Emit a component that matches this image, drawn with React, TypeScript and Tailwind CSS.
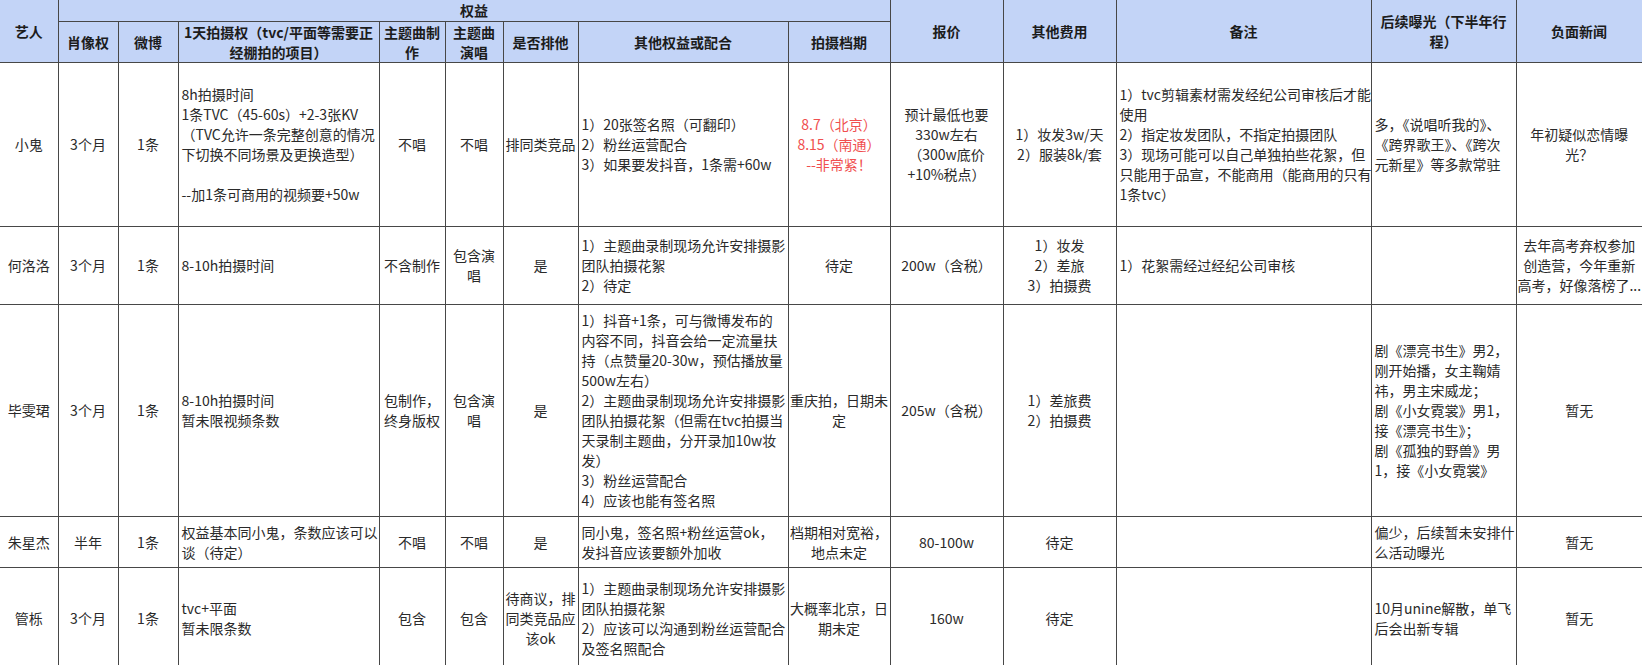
import React from "react";

type Row = {
  h: string;
  cells: string[][];
};

// column widths, taken from the sheet
const widths = [58, 60, 60, 201, 66, 58, 75, 210, 102, 113, 113, 255, 145, 126];
const aligns = ["c", "c", "c", "l", "c", "c", "c", "l", "c", "c", "c", "l", "l", "c"];

const rows: Row[] = [
  {
    h: "h-[164px]",
    cells: [
      ["小鬼"],
      ["3个月"],
      ["1条"],
      [
        "8h拍摄时间",
        "1条TVC（45-60s）+2-3张KV",
        "（TVC允许一条完整创意的情况",
        "下切换不同场景及更换造型）",
        "",
        "--加1条可商用的视频要+50w",
      ],
      ["不唱"],
      ["不唱"],
      ["排同类竞品"],
      ["1）20张签名照（可翻印）", "2）粉丝运营配合", "3）如果要发抖音，1条需+60w"],
      ["8.7（北京）", "8.15（南通）", "--非常紧！"],
      ["预计最低也要", "330w左右", "（300w底价", "+10%税点）"],
      ["1）妆发3w/天", "2）服装8k/套"],
      [
        "1）tvc剪辑素材需发经纪公司审核后才能",
        "使用",
        "2）指定妆发团队，不指定拍摄团队",
        "3）现场可能可以自己单独拍些花絮，但",
        "只能用于品宣，不能商用（能商用的只有",
        "1条tvc）",
      ],
      ["多，《说唱听我的》、", "《跨界歌王》、《跨次", "元新星》等多款常驻"],
      ["年初疑似恋情曝", "光？"],
    ],
  },
  {
    h: "h-[78px]",
    cells: [
      ["何洛洛"],
      ["3个月"],
      ["1条"],
      ["8-10h拍摄时间"],
      ["不含制作"],
      ["包含演", "唱"],
      ["是"],
      ["1）主题曲录制现场允许安排摄影", "团队拍摄花絮", "2）待定"],
      ["待定"],
      ["200w（含税）"],
      ["1）妆发", "2）差旅", "3）拍摄费"],
      ["1）花絮需经过经纪公司审核"],
      [],
      ["去年高考弃权参加", "创造营，今年重新", "高考，好像落榜了..."],
    ],
  },
  {
    h: "h-[212px]",
    cells: [
      ["毕雯珺"],
      ["3个月"],
      ["1条"],
      ["8-10h拍摄时间", "暂未限视频条数"],
      ["包制作，", "终身版权"],
      ["包含演", "唱"],
      ["是"],
      [
        "1）抖音+1条，可与微博发布的",
        "内容不同，抖音会给一定流量扶",
        "持（点赞量20-30w，预估播放量",
        "500w左右）",
        "2）主题曲录制现场允许安排摄影",
        "团队拍摄花絮（但需在tvc拍摄当",
        "天录制主题曲，分开录加10w妆",
        "发）",
        "3）粉丝运营配合",
        "4）应该也能有签名照",
      ],
      ["重庆拍，日期未", "定"],
      ["205w（含税）"],
      ["1）差旅费", "2）拍摄费"],
      [],
      [
        "剧《漂亮书生》男2，",
        "刚开始播，女主鞠婧",
        "祎，男主宋威龙；",
        "剧《小女霓裳》男1，",
        "接《漂亮书生》；",
        "剧《孤独的野兽》男",
        "1，接《小女霓裳》",
      ],
      ["暂无"],
    ],
  },
  {
    h: "h-[51px]",
    cells: [
      ["朱星杰"],
      ["半年"],
      ["1条"],
      ["权益基本同小鬼，条数应该可以", "谈（待定）"],
      ["不唱"],
      ["不唱"],
      ["是"],
      ["同小鬼，签名照+粉丝运营ok，", "发抖音应该要额外加收"],
      ["档期相对宽裕，", "地点未定"],
      ["80-100w"],
      ["待定"],
      [],
      ["偏少，后续暂未安排什", "么活动曝光"],
      ["暂无"],
    ],
  },
  {
    h: "h-[102px]",
    cells: [
      ["管栎"],
      ["3个月"],
      ["1条"],
      ["tvc+平面", "暂未限条数"],
      ["包含"],
      ["包含"],
      ["待商议，排", "同类竞品应", "该ok"],
      ["1）主题曲录制现场允许安排摄影", "团队拍摄花絮", "2）应该可以沟通到粉丝运营配合", "及签名照配合"],
      ["大概率北京，日", "期未定"],
      ["160w"],
      ["待定"],
      [],
      ["10月unine解散，单飞", "后会出新专辑"],
      ["暂无"],
    ],
  },
];

function Lines({ lines }: { lines: string[] }) {
  return (
    <>
      {lines.map((t, i) => (
        <div key={i} className="whitespace-nowrap h-[20px]">
          {t}
        </div>
      ))}
    </>
  );
}

function HeadCell({
  lines,
  rowSpan,
  colSpan,
  first,
}: {
  lines: string[];
  rowSpan?: number;
  colSpan?: number;
  first?: boolean;
}) {
  return (
    <th
      rowSpan={rowSpan}
      colSpan={colSpan}
      className={`border border-t-0 border-[#474747] bg-[#c3d4f7] p-0 text-center align-middle font-bold text-[14px] leading-[20px] text-[#1c1c1c] ${
        first ? "border-l-0" : ""
      }`}
    >
      <Lines lines={lines} />
    </th>
  );
}

export default function App() {
  return (
    <div
      className="h-[665px] w-[1642px] overflow-hidden bg-white text-[#2a2a2a]"
      style={{ fontFamily: '"Noto Sans CJK SC", "Noto Sans", sans-serif' }}
    >
      <table className="table-fixed border-collapse w-[1642px] text-[14px] leading-[20px]">
        <colgroup>
          {widths.map((w, i) => (
            <col key={i} style={{ width: w }} />
          ))}
        </colgroup>
        <thead>
          <tr className="h-[21px]">
            <HeadCell lines={["艺人"]} rowSpan={2} first />
            <HeadCell lines={["权益"]} colSpan={8} />
            <HeadCell lines={["报价"]} rowSpan={2} />
            <HeadCell lines={["其他费用"]} rowSpan={2} />
            <HeadCell lines={["备注"]} rowSpan={2} />
            <HeadCell lines={["后续曝光（下半年行", "程）"]} rowSpan={2} />
            <HeadCell lines={["负面新闻"]} rowSpan={2} />
          </tr>
          <tr className="h-[41px]">
            <HeadCell lines={["肖像权"]} />
            <HeadCell lines={["微博"]} />
            <HeadCell lines={["1天拍摄权（tvc/平面等需要正", "经棚拍的项目）"]} />
            <HeadCell lines={["主题曲制", "作"]} />
            <HeadCell lines={["主题曲", "演唱"]} />
            <HeadCell lines={["是否排他"]} />
            <HeadCell lines={["其他权益或配合"]} />
            <HeadCell lines={["拍摄档期"]} />
          </tr>
        </thead>
        <tbody>
          {rows.map((r, ri) => (
            <tr key={ri} className={r.h}>
              {r.cells.map((lines, ci) => (
                <td
                  key={ci}
                  className={`border border-[#474747] p-0 align-middle ${
                    aligns[ci] === "l" ? "pl-[3px] text-left" : "text-center"
                  } ${ci === 0 ? "border-l-0" : ""} ${ci === 13 ? "border-r-0" : ""} ${
                    ri === 0 && ci === 8 ? "text-[#f04f4f]" : ""
                  }`}
                >
                  <Lines lines={lines} />
                </td>
              ))}
            </tr>
          ))}
        </tbody>
      </table>
    </div>
  );
}
